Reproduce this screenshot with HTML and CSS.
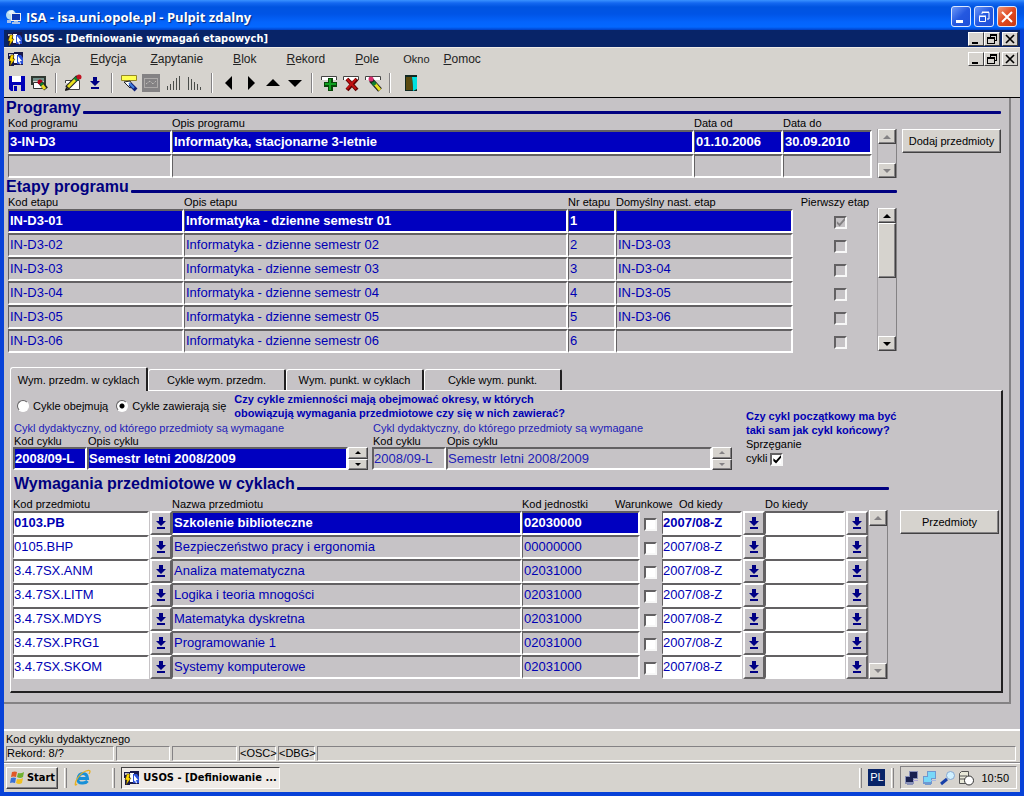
FILE: index.html
```html
<!DOCTYPE html>
<html lang="pl">
<head>
<meta charset="utf-8">
<title>ISA - isa.uni.opole.pl - Pulpit zdalny</title>
<link rel="stylesheet" href="styles.css">
</head>
<body>
<svg class="defs" aria-hidden="true">
  <symbol id="usos" viewBox="0 0 16 16">
    <path fill="#18184a" d="M0 2h6V1h9v13H6v1H1V8H0z"/>
    <path fill="#c6c3c6" d="M1 3h4v2H1z"/><path fill="#fff" d="M6 3h4v9H6z"/>
    <path fill="#2a50d8" d="M9 4h4l2 3v6H9z"/><path fill="#fff" d="M10 5l4 5h-2l1 3-1 .5-1-3-1 1z"/>
    <path fill="#ffd800" d="M3 4h3L5 8h2l-5 7 1-5H1z" stroke="#403000" stroke-width=".5"/>
  </symbol>
  <symbol id="up" viewBox="0 0 8 4"><path fill="currentColor" d="M4 0l4 4H0z"/></symbol>
  <symbol id="down" viewBox="0 0 8 4"><path fill="currentColor" d="M0 0h8L4 4z"/></symbol>
  <symbol id="lov" viewBox="0 0 10 12"><path fill="#000084" d="M3 0h4v4h3L5 9 0 4h3zM1 10h8v2H1z"/></symbol>
  <symbol id="min" viewBox="0 0 10 10"><path fill="currentColor" d="M1 8h6v2H1z"/></symbol>
  <symbol id="restore" viewBox="0 0 10 10"><path fill="currentColor" fill-rule="evenodd" d="M3 0h7v7H8v3H0V3h3zM4 2v1h4v3h1V2zM1 5v4h6V5z"/></symbol>
  <symbol id="close" viewBox="0 0 10 10"><path stroke="currentColor" stroke-width="1.7" d="M1 1l8 8M9 1L1 9"/></symbol>
</svg>

<header class="titlebar">
  <svg width="16" height="16" viewBox="0 0 16 16"><circle cx="5" cy="6" r="5" fill="#b8dcf0"/><path fill="#e8f4ff" d="M2 4q3-4 6-2L6 6z"/><path fill="#f0f0f0" d="M5 4h10v8H5z"/><path fill="#1038b0" d="M6 5h8v6H6z"/><path fill="#a8c0e8" d="M8 12h4v1h2v2H6v-2h2zM1 11h4v3H1z"/></svg>
  <h1>ISA - isa.uni.opole.pl - Pulpit zdalny</h1>
  <div class="xp-buttons">
    <button type="button" aria-label="Minimalizuj"><svg width="12" height="12" viewBox="0 0 12 12"><path fill="#fff" d="M1 9h7v3H1z"/></svg></button>
    <button type="button" aria-label="Przywróć"><svg width="12" height="12" viewBox="0 0 12 12"><path fill="none" stroke="#fff" d="M4 3V1.500h7V8H9M1.500 5.500h6v5h-6zM4 1h7M1 5h7"/></svg></button>
    <button type="button" class="xp-close" aria-label="Zamknij"><svg width="12" height="12" viewBox="0 0 12 12"><path stroke="#fff" stroke-width="2" d="M1 1l10 10M11 1L1 11"/></svg></button>
  </div>
</header>

<div class="app">
  <div class="app-title">
    <svg width="16" height="16"><use href="#usos"/></svg>
    <h2>USOS - [Definiowanie wymagań etapowych]</h2>
    <div class="mdi">
      <button type="button" aria-label="Minimalizuj aplikację"><svg width="10" height="10"><use href="#min"/></svg></button>
      <button type="button" aria-label="Przywróć aplikację"><svg width="10" height="10"><use href="#restore"/></svg></button>
      <button type="button" aria-label="Zamknij aplikację"><svg width="10" height="10"><use href="#close"/></svg></button>
    </div>
  </div>
  <div class="menubar">
    <svg width="16" height="16"><use href="#usos"/></svg>
    <nav class="menu">
      <a href="#akcja"><u>A</u>kcja</a><a href="#edycja" class="near"><u>E</u>dycja</a><a href="#zapytanie"><u>Z</u>apytanie</a><a href="#blok"><u>B</u>lok</a><a href="#rekord"><u>R</u>ekord</a><a href="#pole" class="near"><u>P</u>ole</a><a href="#okno" class="plain">Okno</a><a href="#pomoc"><u>P</u>omoc</a>
    </nav>
    <div class="mdi">
      <button type="button" aria-label="Minimalizuj okno"><svg width="10" height="10"><use href="#min"/></svg></button>
      <button type="button" aria-label="Przywróć okno"><svg width="10" height="10"><use href="#restore"/></svg></button>
      <button type="button" aria-label="Zamknij okno"><svg width="10" height="10"><use href="#close"/></svg></button>
    </div>
  </div>
  <div class="toolbar" role="toolbar" aria-label="Narzędzia">
    <button type="button" aria-label="Zapisz"><svg width="18" height="18" viewBox="0 0 18 18"><path fill="#0000b8" d="M1 2h16v15H3l-2-2z"/><path fill="#fff" d="M4 2h9v6H4z"/><path fill="#d6d3ce" d="M5 11h8v6H5z"/><path fill="#0000b8" d="M6 12h3v5H6z"/></svg></button>
    <button type="button" aria-label="Drukuj"><svg width="18" height="18" viewBox="0 0 18 18"><path fill="#303830" d="M1 2h15v9h-2V4H3v7H1z"/><path fill="#709088" d="M3 4h11v3H3z"/><path fill="#fff" stroke="#333" d="M3.500 8.500h9v6h-9z"/><circle cx="10" cy="8" r="2.500" fill="#b00018"/><path stroke="#202020" stroke-width="5" d="M11 9l5 6"/><path stroke="#e8d820" stroke-width="3" d="M12 11l3 4"/><path stroke="#108030" stroke-width="3" d="M11 9l1.500 2"/></svg></button>
    <i class="sep"></i>
    <button type="button" aria-label="Edytuj"><svg width="18" height="18" viewBox="0 0 18 18"><path fill="#fff" stroke="#444" d="M1.500 6.500h14v9h-14z"/><path fill="#d6d3ce" d="M0 9h4v6H0z"/><path stroke="#202020" stroke-width="5" d="M3 14L14 3"/><path stroke="#e8e020" stroke-width="3" d="M4 13l8-8"/><path stroke="#108030" stroke-width="4" d="M11 6l2-2"/><circle cx="15" cy="3" r="2.500" fill="#c01020"/><path fill="#111" d="M1 17l1-4 3 3z"/></svg></button>
    <button type="button" aria-label="Lista wartości"><svg width="10" height="12"><use href="#lov"/></svg></button>
    <i class="sep"></i>
    <button type="button" aria-label="Zapytanie"><svg width="18" height="18" viewBox="0 0 18 18"><path fill="#ffff50" stroke="#948828" d="M1.500 1.500h15v5h-15z"/><path fill="#fff" stroke="#222" d="M4 8l6-1 3 5-3 2z"/><path stroke="#10207a" stroke-width="4" d="M10 10l6 6"/><path stroke="#4080e0" stroke-width="2" d="M9 9l5 5"/></svg></button>
    <button type="button" aria-label="Wykonaj zapytanie"><svg width="18" height="18" viewBox="0 0 18 18"><path fill="#848284" d="M0 0h18v18H0z"/><path fill="none" stroke="#d6d3ce" stroke-dasharray="1 1" d="M2.500 4.500h13v9h-13zM4 10l4-3 3 3 3-3"/></svg></button>
    <button type="button" aria-label="Sortuj rosnąco"><svg width="18" height="18" viewBox="0 0 18 18"><path fill="#4a4d4a" d="M3 12h1v4H3zM6 10h1v6H6zM9 7h1v9H9zM12 4h1v12h-1zM15 2h1v14h-1z"/></svg></button>
    <button type="button" aria-label="Sortuj malejąco"><svg width="18" height="18" viewBox="0 0 18 18"><path fill="#4a4d4a" d="M2 3h1v13H2zM5 5h1v11H5zM8 8h1v8H8zM11 10h1v6h-1zM14 13h1v3h-1z"/></svg></button>
    <i class="sep"></i>
    <button type="button" aria-label="Poprzedni rekord"><svg width="8" height="14" viewBox="0 0 8 14"><path d="M7 0v14L0 7z"/></svg></button>
    <button type="button" aria-label="Następny rekord"><svg width="8" height="14" viewBox="0 0 8 14"><path d="M1 0v14l7-7z"/></svg></button>
    <button type="button" aria-label="Poprzedni blok"><svg width="14" height="8" viewBox="0 0 14 8"><path d="M0 7h14L7 0z"/></svg></button>
    <button type="button" aria-label="Następny blok"><svg width="14" height="8" viewBox="0 0 14 8"><path d="M0 1h14L7 8z"/></svg></button>
    <i class="sep"></i>
    <button type="button" aria-label="Wstaw rekord"><svg width="18" height="18" viewBox="0 0 18 18"><path fill="#fff" stroke="#444" d="M1.500 6V2.500h15V6"/><path fill="#084808" d="M8 4h5v4h4v5h-4v4H8v-4H4V8h4z"/><path fill="#10a020" d="M9 5h2v4h5v2h-5v5H9v-5H5V9h4z"/></svg></button>
    <button type="button" aria-label="Usuń rekord"><svg width="18" height="18" viewBox="0 0 18 18"><path fill="#fff" stroke="#444" d="M1.500 6V2.500h15V6"/><path stroke="#600000" stroke-width="4" d="M5 5l10 11M15 5L5 16"/><path stroke="#c01010" stroke-width="2" d="M5 5l9 10M14 5l-9 10"/></svg></button>
    <button type="button" aria-label="Wyczyść rekord"><svg width="18" height="18" viewBox="0 0 18 18"><path fill="#fff" stroke="#444" d="M1.500 6V2.500h15V6"/><path stroke="#202020" stroke-width="5" d="M7 6l9 10"/><path stroke="#e8e020" stroke-width="3" d="M11 10l5 6"/><path stroke="#108030" stroke-width="4" d="M9 8l2 3"/><circle cx="7" cy="5" r="2.500" fill="#d83070"/></svg></button>
    <i class="sep"></i>
    <button type="button" class="exit" aria-label="Wyjście"><svg width="12" height="16" viewBox="0 0 12 16"><path d="M0 0h12v16H0z" fill="#102820"/><path fill="#00e0e0" d="M7 2h5v12l-4 2z"/><path fill="#5a4a10" d="M1 2h6l1 13H1z"/></svg></button>
  </div>

  <main class="canvas">
    <div class="form">
      <section>
        <div class="heading"><h3>Programy</h3><hr></div>
        <div class="block">
          <table class="grid">
            <colgroup><col class="w-prog"><col><col class="w-date"><col class="w-date"></colgroup>
            <thead><tr><th>Kod programu</th><th>Opis programu</th><th>Data od</th><th>Data do</th></tr></thead>
            <tbody>
              <tr class="current"><td>3-IN-D3</td><td>Informatyka, stacjonarne 3-letnie</td><td>01.10.2006</td><td>30.09.2010</td></tr>
              <tr><td></td><td></td><td></td><td></td></tr>
            </tbody>
          </table>
          <div class="scroll off"><button type="button" aria-label="Programy w górę"><svg width="8" height="4"><use href="#up"/></svg></button><i></i><button type="button" aria-label="Programy w dół"><svg width="8" height="4"><use href="#down"/></svg></button></div>
          <button type="button" class="push">Dodaj przedmioty</button>
        </div>
      </section>

      <section class="stages">
        <div class="heading"><h3>Etapy programu</h3><hr></div>
        <div class="block">
          <table class="grid">
            <colgroup><col class="w-stage"><col><col class="w-nr"><col class="w-next"><col class="w-first"></colgroup>
            <thead><tr><th>Kod etapu</th><th>Opis etapu</th><th>Nr etapu</th><th>Domyślny nast. etap</th><th class="mid">Pierwszy etap</th></tr></thead>
            <tbody>
              <tr class="current"><td>IN-D3-01</td><td>Informatyka - dzienne semestr 01</td><td>1</td><td></td><td class="bare"><input type="checkbox" disabled checked aria-label="Pierwszy etap 1"></td></tr>
              <tr><td>IN-D3-02</td><td>Informatyka - dzienne semestr 02</td><td>2</td><td>IN-D3-03</td><td class="bare"><input type="checkbox" disabled aria-label="Pierwszy etap 2"></td></tr>
              <tr><td>IN-D3-03</td><td>Informatyka - dzienne semestr 03</td><td>3</td><td>IN-D3-04</td><td class="bare"><input type="checkbox" disabled aria-label="Pierwszy etap 3"></td></tr>
              <tr><td>IN-D3-04</td><td>Informatyka - dzienne semestr 04</td><td>4</td><td>IN-D3-05</td><td class="bare"><input type="checkbox" disabled aria-label="Pierwszy etap 4"></td></tr>
              <tr><td>IN-D3-05</td><td>Informatyka - dzienne semestr 05</td><td>5</td><td>IN-D3-06</td><td class="bare"><input type="checkbox" disabled aria-label="Pierwszy etap 5"></td></tr>
              <tr><td>IN-D3-06</td><td>Informatyka - dzienne semestr 06</td><td>6</td><td></td><td class="bare"><input type="checkbox" disabled aria-label="Pierwszy etap 6"></td></tr>
            </tbody>
          </table>
          <div class="scroll"><button type="button" aria-label="Etapy w górę"><svg width="8" height="4"><use href="#up"/></svg></button><i><b></b></i><button type="button" aria-label="Etapy w dół"><svg width="8" height="4"><use href="#down"/></svg></button></div>
        </div>
      </section>

      <section class="tabbed">
        <div class="tabs" role="tablist">
          <button type="button" role="tab" aria-selected="true">Wym. przedm. w cyklach</button>
          <button type="button" role="tab" aria-selected="false">Cykle wym. przedm.</button>
          <button type="button" role="tab" aria-selected="false">Wym. punkt. w cyklach</button>
          <button type="button" role="tab" aria-selected="false">Cykle wym. punkt.</button>
        </div>
        <div class="panel" role="tabpanel">
          <div class="cycles">
            <div class="cycles-main">
              <div class="choice">
                <label><input type="radio" name="tryb">Cykle obejmują</label>
                <label><input type="radio" name="tryb" checked>Cykle zawierają się</label>
                <p class="question">Czy cykle zmienności mają obejmować okresy, w których<br>obowiązują wymagania przedmiotowe czy się w nich zawierać?</p>
              </div>
              <div class="pair">
                <fieldset class="cycle">
                  <legend>Cykl dydaktyczny, od którego przedmioty są wymagane</legend>
                  <label for="kod-od">Kod cyklu</label><label for="opis-od">Opis cyklu</label>
                  <input id="kod-od" class="field active" value="2008/09-L"><input id="opis-od" class="field active" value="Semestr letni 2008/2009" readonly>
                  <div class="spin"><button type="button" aria-label="Cykl od w górę"><svg width="6" height="3" viewBox="0 0 8 4"><use href="#up"/></svg></button><button type="button" aria-label="Cykl od w dół"><svg width="6" height="3" viewBox="0 0 8 4"><use href="#down"/></svg></button></div>
                </fieldset>
                <fieldset class="cycle">
                  <legend>Cykl dydaktyczny, do którego przedmioty są wymagane</legend>
                  <label for="kod-do">Kod cyklu</label><label for="opis-do">Opis cyklu</label>
                  <input id="kod-do" class="field" value="2008/09-L" readonly><input id="opis-do" class="field" value="Semestr letni 2008/2009" readonly>
                  <div class="spin off"><button type="button" aria-label="Cykl do w górę"><svg width="6" height="3" viewBox="0 0 8 4"><use href="#up"/></svg></button><button type="button" aria-label="Cykl do w dół"><svg width="6" height="3" viewBox="0 0 8 4"><use href="#down"/></svg></button></div>
                </fieldset>
              </div>
            </div>
            <div class="cycles-side">
              <p class="question">Czy cykl początkowy ma być<br>taki sam jak cykl końcowy?</p>
              <label>Sprzęganie<br>cykli <input type="checkbox" checked></label>
            </div>
          </div>

          <div class="needs">
            <div class="heading"><h3>Wymagania przedmiotowe w cyklach</h3><hr></div>
            <div class="block">
              <table class="grid">
                <colgroup><col class="w-code"><col class="w-btn"><col><col class="w-unit"><col class="w-check"><col class="w-cycle"><col class="w-btn"><col class="w-cycle"><col class="w-btn"></colgroup>
                <thead><tr><th colspan="2">Kod przedmiotu</th><th>Nazwa przedmiotu</th><th>Kod jednostki</th><th><span class="spill">Warunkowe</span></th><th colspan="2" class="inset">Od kiedy</th><th colspan="2">Do kiedy</th></tr></thead>
                <tbody>
                  <tr class="current"><td class="edit"><input aria-label="Kod przedmiotu 1" value="0103.PB"></td><td class="pick"><button type="button" aria-label="Wybierz przedmiot 1"><svg width="10" height="12"><use href="#lov"/></svg></button></td><td>Szkolenie biblioteczne</td><td>02030000</td><td class="bare"><input type="checkbox" aria-label="Warunkowe 1"></td><td class="edit"><input aria-label="Od kiedy 1" value="2007/08-Z"></td><td class="pick"><button type="button" aria-label="Wybierz od 1"><svg width="10" height="12"><use href="#lov"/></svg></button></td><td class="edit"><input aria-label="Do kiedy 1"></td><td class="pick"><button type="button" aria-label="Wybierz do 1"><svg width="10" height="12"><use href="#lov"/></svg></button></td></tr>
                  <tr><td class="edit"><input aria-label="Kod przedmiotu 2" value="0105.BHP"></td><td class="pick"><button type="button" aria-label="Wybierz przedmiot 2"><svg width="10" height="12"><use href="#lov"/></svg></button></td><td>Bezpieczeństwo pracy i ergonomia</td><td>00000000</td><td class="bare"><input type="checkbox" aria-label="Warunkowe 2"></td><td class="edit"><input aria-label="Od kiedy 2" value="2007/08-Z"></td><td class="pick"><button type="button" aria-label="Wybierz od 2"><svg width="10" height="12"><use href="#lov"/></svg></button></td><td class="edit"><input aria-label="Do kiedy 2"></td><td class="pick"><button type="button" aria-label="Wybierz do 2"><svg width="10" height="12"><use href="#lov"/></svg></button></td></tr>
                  <tr><td class="edit"><input aria-label="Kod przedmiotu 3" value="3.4.7SX.ANM"></td><td class="pick"><button type="button" aria-label="Wybierz przedmiot 3"><svg width="10" height="12"><use href="#lov"/></svg></button></td><td>Analiza matematyczna</td><td>02031000</td><td class="bare"><input type="checkbox" aria-label="Warunkowe 3"></td><td class="edit"><input aria-label="Od kiedy 3" value="2007/08-Z"></td><td class="pick"><button type="button" aria-label="Wybierz od 3"><svg width="10" height="12"><use href="#lov"/></svg></button></td><td class="edit"><input aria-label="Do kiedy 3"></td><td class="pick"><button type="button" aria-label="Wybierz do 3"><svg width="10" height="12"><use href="#lov"/></svg></button></td></tr>
                  <tr><td class="edit"><input aria-label="Kod przedmiotu 4" value="3.4.7SX.LITM"></td><td class="pick"><button type="button" aria-label="Wybierz przedmiot 4"><svg width="10" height="12"><use href="#lov"/></svg></button></td><td>Logika i teoria mnogości</td><td>02031000</td><td class="bare"><input type="checkbox" aria-label="Warunkowe 4"></td><td class="edit"><input aria-label="Od kiedy 4" value="2007/08-Z"></td><td class="pick"><button type="button" aria-label="Wybierz od 4"><svg width="10" height="12"><use href="#lov"/></svg></button></td><td class="edit"><input aria-label="Do kiedy 4"></td><td class="pick"><button type="button" aria-label="Wybierz do 4"><svg width="10" height="12"><use href="#lov"/></svg></button></td></tr>
                  <tr><td class="edit"><input aria-label="Kod przedmiotu 5" value="3.4.7SX.MDYS"></td><td class="pick"><button type="button" aria-label="Wybierz przedmiot 5"><svg width="10" height="12"><use href="#lov"/></svg></button></td><td>Matematyka dyskretna</td><td>02031000</td><td class="bare"><input type="checkbox" aria-label="Warunkowe 5"></td><td class="edit"><input aria-label="Od kiedy 5" value="2007/08-Z"></td><td class="pick"><button type="button" aria-label="Wybierz od 5"><svg width="10" height="12"><use href="#lov"/></svg></button></td><td class="edit"><input aria-label="Do kiedy 5"></td><td class="pick"><button type="button" aria-label="Wybierz do 5"><svg width="10" height="12"><use href="#lov"/></svg></button></td></tr>
                  <tr><td class="edit"><input aria-label="Kod przedmiotu 6" value="3.4.7SX.PRG1"></td><td class="pick"><button type="button" aria-label="Wybierz przedmiot 6"><svg width="10" height="12"><use href="#lov"/></svg></button></td><td>Programowanie 1</td><td>02031000</td><td class="bare"><input type="checkbox" aria-label="Warunkowe 6"></td><td class="edit"><input aria-label="Od kiedy 6" value="2007/08-Z"></td><td class="pick"><button type="button" aria-label="Wybierz od 6"><svg width="10" height="12"><use href="#lov"/></svg></button></td><td class="edit"><input aria-label="Do kiedy 6"></td><td class="pick"><button type="button" aria-label="Wybierz do 6"><svg width="10" height="12"><use href="#lov"/></svg></button></td></tr>
                  <tr><td class="edit"><input aria-label="Kod przedmiotu 7" value="3.4.7SX.SKOM"></td><td class="pick"><button type="button" aria-label="Wybierz przedmiot 7"><svg width="10" height="12"><use href="#lov"/></svg></button></td><td>Systemy komputerowe</td><td>02031000</td><td class="bare"><input type="checkbox" aria-label="Warunkowe 7"></td><td class="edit"><input aria-label="Od kiedy 7" value="2007/08-Z"></td><td class="pick"><button type="button" aria-label="Wybierz od 7"><svg width="10" height="12"><use href="#lov"/></svg></button></td><td class="edit"><input aria-label="Do kiedy 7"></td><td class="pick"><button type="button" aria-label="Wybierz do 7"><svg width="10" height="12"><use href="#lov"/></svg></button></td></tr>
                </tbody>
              </table>
              <div class="scroll off"><button type="button" aria-label="Wymagania w górę"><svg width="8" height="4"><use href="#up"/></svg></button><i></i><button type="button" aria-label="Wymagania w dół"><svg width="8" height="4"><use href="#down"/></svg></button></div>
              <button type="button" class="push far">Przedmioty</button>
            </div>
          </div>
        </div>
      </section>
    </div>
  </main>

  <div class="status">
    <div class="hint">Kod cyklu dydaktycznego</div>
    <div class="cells"><span class="c-rec">Rekord: 8/?</span><span class="c-a"></span><span class="c-b"></span><span class="c-tag">&lt;OSC&gt;</span><span class="c-tag">&lt;DBG&gt;</span><span class="c-rest"></span></div>
  </div>
</div>

<footer class="taskbar">
  <button type="button" class="start"><svg width="16" height="16" viewBox="0 0 16 16"><path fill="#e05828" d="M3 2q3-1 5 0L7 7Q4 6 2 7z"/><path fill="#70b030" d="M9 3q3 1 6-1l-1 5q-3 2-6 0z"/><path fill="#3870d8" d="M2 8q3-1 5 0l-1 5q-3-1-5 0z"/><path fill="#f0c020" d="M8 9q3 1 6-1l-1 5q-3 2-6 0z"/></svg>Start</button>
  <i class="grip"></i>
  <button type="button" class="quick" aria-label="Internet Explorer"><svg width="18" height="18" viewBox="0 0 18 18"><path fill="none" stroke="#1890d8" stroke-width="3" d="M4 9.500h9.500Q13 4.500 9 4.500T4 9.500 9 14q3 0 4.500-2"/><path fill="none" stroke="#e8b020" stroke-width="1.300" d="M3 15Q0 18 2 12 6 4 12 2q6-2 3 3"/></svg></button>
  <i class="grip"></i>
  <button type="button" class="task"><svg width="16" height="16"><use href="#usos"/></svg>USOS - [Definiowanie ...</button>
  <span class="room"></span>
  <i class="grip"></i>
  <span class="lang">PL</span>
  <i class="grip"></i>
  <div class="tray">
    <svg width="16" height="16" viewBox="0 0 16 16"><path fill="#8890b8" d="M5 1h9v8H5zM1 6h9v8H1zM3 14h6v1H3z"/><path fill="#182050" d="M6 2h7v6H6zM2 7h7v5H2z"/><path fill="#b0a8d8" d="M9 10h5v1H9z"/></svg>
    <svg width="16" height="16" viewBox="0 0 16 16"><path fill="#7098d0" d="M5 1h9v8H5zM1 6h9v8H1zM3 14h6v1H3z"/><path fill="#78d8f8" d="M6 2h7v6H6zM2 7h7v5H2z"/><path fill="#a8b8e0" d="M9 10h5v1H9z"/></svg>
    <svg width="16" height="16" viewBox="0 0 16 16"><path stroke="#1840a8" stroke-width="3" d="M1 14l6-5"/><circle cx="10.500" cy="5.500" r="4" fill="#d0f0ff" stroke="#88a8d0"/></svg>
    <svg width="16" height="16" viewBox="0 0 16 16"><path fill="#e8e8d8" stroke="#555" d="M1.500 3.500l2-2h7v12h-9z"/><path stroke="#555" d="M1 6h8M1 9h7"/><circle cx="11" cy="10.500" r="4.500" fill="#fff" stroke="#333"/></svg>
    <time>10:50</time>
  </div>
</footer>
</body>
</html>
```
FILE: styles.css
```css
* { box-sizing: border-box; }

body {
  margin: 0;
  min-height: 100vh;
  display: flex;
  flex-direction: column;
  padding: 0 4px 4px;
  background: #0842d8;
  font: 11px/14px "Liberation Sans", Arial, sans-serif;
  color: #000;
}

h1, h2, h3, p, hr { margin: 0; }
button, input { font: inherit; color: inherit; }
button { padding: 0; display: flex; align-items: center; justify-content: center; }
svg { display: block; flex: none; }
.defs { position: absolute; width: 0; height: 0; }

/* Remote desktop window caption */
.titlebar {
  height: 30px;
  margin: 0 -4px;
  padding: 3px 7px 0 6px;
  display: flex;
  align-items: center;
  gap: 4px;
  background: linear-gradient(#3a92ff 0, #1468f0 3px, #0054e0 7px, #0054e6 14px, #0464fc 22px, #0468ff 27px, #0040c8 30px);
}
.titlebar h1 {
  flex: 1;
  font: bold 13px/18px "Open Sans", "Noto Sans", sans-serif;
  color: #fff;
  text-shadow: 1px 1px 1px #082880;
}
.xp-buttons { display: flex; gap: 3px; }
.xp-buttons button {
  width: 20px;
  height: 21px;
  border: 1px solid #dce8ff;
  border-radius: 3px;
  background: linear-gradient(135deg, #6c98f8, #2458e0 50%, #2050d8);
}
.xp-buttons .xp-close { background: linear-gradient(135deg, #f09878, #e04820 50%, #c83810); }

.app { flex: 1; display: flex; flex-direction: column; background: #d6d3ce; }
.app-title {
  height: 17px;
  padding: 0 2px 0 3px;
  display: flex;
  align-items: center;
  gap: 1px;
  background: #082468;
}
.app-title h2 { flex: 1; color: #fff; font: bold 11px/16px "DejaVu Sans Condensed", sans-serif; }
.mdi { display: flex; }
.mdi button {
  width: 16px;
  height: 14px;
  border: 1px solid;
  border-color: #fff #424142 #424142 #fff;
  background: #d6d3ce;
}
.mdi button:last-child { margin-left: 2px; }
.menubar { height: 22px; padding: 0 2px 0 4px; display: flex; align-items: center; border-top: 1px solid #efebe7; }
.menu { flex: 1; padding-left: 7px; display: flex; align-items: center; font-size: 12px; }
.menu a { margin-right: 30px; color: #222; text-decoration: none; }
.menu .near { margin-right: 24px; }
.menu .plain { margin-right: 14px; font-size: 11px; }
.toolbar {
  height: 29px;
  padding: 0 2px;
  display: flex;
  align-items: center;
  border-bottom: 1px solid #000;
}
.toolbar button { width: 22px; height: 22px; border: 0; background: none; }
.toolbar .exit { margin-left: 4px; }
.sep { width: 2px; height: 20px; margin: 0 5px; border-left: 1px solid #848284; border-right: 1px solid #fff; }

/* Form */
.canvas { flex: 1; padding-right: 9px; background: #c6c3c6; }
.form { padding: 1px 0 9px; border-right: 2px solid #848284; border-bottom: 2px solid #848284; }
.heading { display: flex; align-items: center; gap: 2px; margin: 0 8px 0 2px; color: #000080; }
.heading h3 { font-size: 16px; line-height: 18px; }
.heading hr { flex: 1; height: 3px; margin-top: 8px; border: 0; border-radius: 1px; background: #000080; }
.stages { padding-right: 104px; }
.block { display: flex; align-items: flex-end; margin: 0 8px 0 4px; }

.grid { flex: 1; width: 100%; min-width: 0; table-layout: fixed; border-spacing: 0; color: #0000b4; }
.grid th { height: 13px; padding: 0; font-weight: normal; font-size: 11px; line-height: 13px; text-align: left; white-space: nowrap; color: #000; }
.grid td {
  height: 24px;
  padding: 0 0 1px 1px;
  border: 2px solid;
  border-color: #636163 #fff #fff #636163;
  border-left-width: 1px;
  font-size: 13px;
  line-height: 17px;
  white-space: nowrap;
}
.grid .current td { background: #0000c0; color: #fff; font-weight: bold; }
.grid .current td.edit { background: #fff; color: #0000b4; }
.grid td.edit { padding-left: 0; background: #fff; }
.grid .edit input { display: block; width: 100%; height: 17px; padding: 0; border: 0; background: none; outline: 0; }
.grid td.bare, .grid .current td.bare { border: 0; padding: 0; background: none; text-align: center; }
.grid td.pick, .grid .current td.pick { border: 0; padding: 0 0 0 1px; background: none; }
.pick button { width: 100%; height: 24px; border: 2px solid; border-color: #fff #636163 #636163 #fff; background: #c6c3c6; }
.grid th.mid { text-align: center; }
.grid th.inset { padding-left: 17px; }
.spill { display: block; margin-left: -25px; }
.w-prog { width: 164px; }
.w-date { width: 89px; }
.w-stage { width: 176px; }
.w-nr { width: 48px; }
.w-next { width: 177px; }
.w-first { width: 84px; }
.stages .grid td.bare { padding-left: 11px; }
.w-code { width: 136px; }
.w-btn { width: 23px; }
.w-unit { width: 118px; }
.w-check { width: 22px; }
.w-cycle { width: 80px; }

input[type="checkbox"] {
  appearance: none;
  width: 13px;
  height: 13px;
  margin: 0;
  vertical-align: middle;
  border: 2px solid;
  border-color: #636163 #f7f7f7 #f7f7f7 #636163;
  background: #fff;
}
input[type="checkbox"]:disabled { background: #c6c3c6; }
input[type="checkbox"]:checked::before {
  content: "";
  display: block;
  width: 9px;
  height: 9px;
  background: #000;
  clip-path: polygon(10% 40%, 40% 65%, 100% 0, 100% 30%, 40% 100%, 10% 70%);
}
input[type="checkbox"]:disabled:checked::before { background: #848284; }
input[type="radio"] {
  appearance: none;
  width: 12px;
  height: 12px;
  margin: 0 4px 0 0;
  border: 1px solid;
  border-color: #636163 #fff #fff #636163;
  border-radius: 50%;
  background: #fff;
}
input[type="radio"]:checked { background: radial-gradient(circle, #000 2px, #fff 3px); }

.scroll {
  width: 20px;
  height: 49px;
  margin-left: 5px;
  display: flex;
  flex: none;
  flex-direction: column;
  border-right: 1px solid #848284;
  border-left: 1px solid #a5a2a5;
}
.scroll button, .spin button, .scroll b, .push {
  border: 1px solid;
  border-color: #fff #424142 #424142 #fff;
  box-shadow: inset -1px -1px #848284;
  background: #d6d3ce;
}
.scroll button { height: 15px; }
.scroll i { flex: 1; }
.scroll b { display: block; height: 55px; }
.off { color: #848284; }
.stages .scroll { height: 143px; margin: 0 0 2px; }
.push { width: 99px; height: 24px; flex: none; margin-left: 5px; align-self: flex-start; margin-top: 12px; }
.push.far { margin-left: 12px; }

/* Tabs */
.tabbed { margin: 14px 6px 0; }
.tabs { display: flex; align-items: flex-end; }
.tabs button {
  width: 138px;
  height: 21px;
  border: solid;
  border-width: 1px 2px 0 1px;
  border-color: #fff #212021 #fff #fff;
  border-radius: 3px 2px 0 0;
  background: #c6c3c6;
}
.tabs [aria-selected="true"] { height: 24px; margin-bottom: -1px; position: relative; }
.panel {
  padding: 1px 2px 12px;
  border: solid;
  border-width: 1px 2px 2px 1px;
  border-color: #fff #212021 #212021 #fff;
}
.cycles { display: flex; gap: 14px; }
.cycles-main { flex: 0 1 719px; }
.cycles-side { padding-top: 17px; }
.question { font-weight: bold; color: #0000b4; white-space: nowrap; }
.choice { display: flex; align-items: center; padding-left: 4px; }
.choice label { display: flex; align-items: center; margin-right: 8px; white-space: nowrap; }
.pair { display: grid; grid-template-columns: 355px 1fr; gap: 4px; }
.cycle {
  min-width: 0;
  margin: 0;
  padding: 0;
  border: 0;
  display: grid;
  grid-template-columns: 74px 1fr 20px;
  color: #000;
}
.cycle legend { padding: 1px 0 0 1px; color: #2020b8; white-space: nowrap; }
.cycle label { padding-left: 1px; line-height: 12px; }
.cycle label:nth-of-type(2) { grid-column: 2 / 4; }
.field {
  min-width: 0;
  height: 23px;
  padding: 0 0 1px;
  border: 2px solid;
  border-color: #636163 #fff #fff #636163;
  background: #c6c3c6;
  color: #2020b8;
  font-size: 13px;
  outline: 0;
}
.field.active { background: #0000c0; color: #fff; font-weight: bold; }
.spin { display: flex; flex-direction: column; }
.spin button { flex: 1; }
.needs { margin-top: 5px; }
.needs .heading { margin: 0 110px 5px 1px; }
.needs .block { margin: 0; }
.needs .scroll { height: 169px; margin-left: 0; }
.needs .scroll button { height: 16px; }

/* Status line */
.status { height: 33px; padding: 2px 4px 3px 2px; border-top: 2px solid #fff; }
.hint { line-height: 12px; margin-bottom: 1px; }
.cells { display: flex; gap: 2px; }
.cells span { height: 15px; line-height: 13px; border: 1px solid; border-color: #848284 #fff #fff #848284; white-space: nowrap; }
.c-rec { width: 108px; }
.c-a { width: 54px; }
.c-b { width: 65px; }
.c-tag { width: 37px; }
.c-rest { flex: 1; }

/* Taskbar */
.taskbar {
  height: 30px;
  padding: 2px 3px 2px 2px;
  display: flex;
  align-items: center;
  background: #d6d3ce;
  border-top: 1px solid #848284;
  box-shadow: inset 0 1px #fff;
}
.start, .task {
  height: 22px;
  border: 1px solid;
  border-color: #fff #424142 #424142 #fff;
  background: #d6d3ce;
  font: bold 11px/14px "DejaVu Sans Condensed", sans-serif;
  gap: 2px;
}
.start { width: 52px; box-shadow: inset -1px -1px #848284; }
.grip { width: 3px; height: 20px; margin: 0 6px; border-left: 1px solid #fff; border-right: 1px solid #848284; }
.quick { width: 33px; height: 20px; padding-right: 14px; border: 0; background: none; }
.task { width: 159px; gap: 3px; border-color: #424142 #fff #fff #424142; background: #efebe7; }
.room { flex: 1; }
.lang { width: 17px; height: 17px; background: #082468; color: #fff; text-align: center; line-height: 17px; }
.tray {
  height: 23px;
  padding: 0 7px 0 3px;
  display: flex;
  align-items: center;
  gap: 2px;
  border: 1px solid;
  border-color: #848284 #fff #fff #848284;
}
.tray time { margin-left: 5px; }
```
